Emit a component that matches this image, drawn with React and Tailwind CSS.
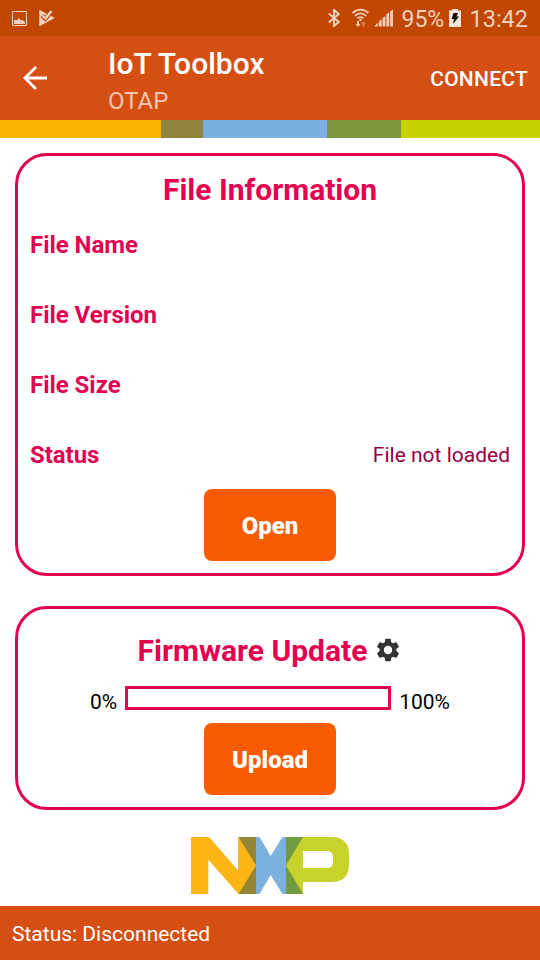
import React from "react";

const fileRows = [
  { label: "File Name", value: "" },
  { label: "File Version", value: "" },
  { label: "File Size", value: "" },
  { label: "Status", value: "File not loaded" },
];

function StatusBar() {
  return (
    <div className="flex h-9 shrink-0 items-center bg-[#c14600] text-[#f3d0bd]">
      <svg className="ml-3 h-[15px] w-[15px]" viewBox="0 0 15 15" fill="none">
        <path d="M.5.5h14v14H.5z" stroke="currentColor" />
        <path d="M2 13V9.500l1.500-1 1 1L7 7l2 2.500 1.500-.5L13 11v2z" fill="currentColor" />
      </svg>
      <svg className="ml-3 h-4 w-4" viewBox="0 0 16 16">
        <path d="M.5 0 8 4l7.500 4L.5 16z" fill="currentColor" />
        <path d="m3 5.500 3.500 3.500L13 1.500" fill="none" stroke="#c14600" strokeWidth="4.400" />
        <path d="M.5 0 6 3 3.500 4.500.5 5zM12 6l3.500 2L.5 16V6l5.500 6z" fill="currentColor" />
        <path d="m3.500 5.500 3 3L12.500 1" fill="none" stroke="currentColor" strokeWidth="2.400" />
      </svg>
      <div className="grow" />
      <svg className="h-[18px] w-3" viewBox="0 0 12 18" fill="none" stroke="currentColor" strokeWidth="2">
        <path d="m.8 4.500 10 8.500L6 17V1l4.800 4L.8 13.500" />
      </svg>
      <svg className="ml-3 h-5 w-[17px]" viewBox="0 0 17 20" fill="none" stroke="currentColor" strokeWidth="1.900">
        <path d="M.7 5C5 .5 12 .5 16.300 5M3 7.800c3-3.200 8-3.200 11 0M5.500 10.400c1.700-1.700 4.300-1.700 6 0" />
        <circle cx="8.500" cy="12" r="1.200" fill="currentColor" stroke="none" />
        <path d="M5 13h2v3h1.500L6 19l-2.500-3H5z" fill="currentColor" stroke="none" />
        <path d="M10.500 18.500V16H9l2.500-3 2.500 3h-1.500v2.500z" fill="#d98252" stroke="none" />
      </svg>
      <svg className="ml-1.5 h-[18px] w-[18px]" viewBox="0 0 19 18" fill="currentColor">
        <path d="M0 18v-1l3-3v4zM4 18v-5l3-3v8zM8 18V9l3-2v11zM12 18V5l3-2v15zM16 18V2l3-2v18z" />
      </svg>
      <span className="mt-0.5 ml-2 w-[43px] text-[23px] leading-none whitespace-nowrap">95%</span>
      <svg className="ml-[5px] h-[18px] w-3" viewBox="0 0 12 18">
        <path d="M3 0h6v1.500h3V18H0V1.500h3z" fill="#f7e5dc" />
        <path d="M4.500 4H9L7.500 7.500H10L4 15l1-5H2.500z" fill="#111" />
      </svg>
      <span className="mt-1 mr-3 ml-2 text-[23.500px] leading-none">13:42</span>
    </div>
  );
}

function AppBar() {
  return (
    <header className="flex h-[84px] shrink-0 items-center bg-[#d54e12] text-white">
      <svg className="ml-[23px] h-6 w-6" viewBox="0 0 24 24" fill="none" stroke="currentColor" strokeWidth="2.800">
        <path d="M24 12H2M13 1 2 12l11 11" />
      </svg>
      <div className="mt-[9px] ml-[61px] grow">
        <h1 className="text-[30px] leading-9 font-medium">IoT Toolbox</h1>
        <p className="mt-px text-[24px] leading-9 text-[#f1c5ae]">OTAP</p>
      </div>
      <button className="mt-1 mr-3 text-[21px] font-medium tracking-[0.25px]">CONNECT</button>
    </header>
  );
}

function ColorStrip() {
  return (
    <div className="flex h-[18px] shrink-0">
      <div className="w-[161px] bg-[#fab400]" />
      <div className="w-[42px] bg-[#92833f]" />
      <div className="w-[124px] bg-[#7bafdf]" />
      <div className="w-[74px] bg-[#7e963d]" />
      <div className="grow bg-[#c8d200]" />
    </div>
  );
}

function ActionButton({ children }) {
  return (
    <button className="mx-auto block h-[72px] w-[132px] rounded-[8px] bg-[#f85b00] pt-0.5 text-[24px] font-black text-white">
      {children}
    </button>
  );
}

function Logo() {
  return (
    <svg className="mx-auto mt-[27px] h-[57px] w-[158px] shrink-0" viewBox="0 0 158 57">
      <path d="M47.500 0H65v57H47.500z" fill="#958536" />
      <path d="M95 0h17v57H95z" fill="#739a3e" />
      <path d="M0 0h18l29.500 34V0L65 28.500 47.500 57 17.300 22.700V57H0z" fill="#fdb415" />
      <path d="M65 0h3.500l11.200 19L91.500 0H95v57h-3.500L79.700 38 68.500 57H65z" fill="#7cb1de" />
      <path d="M112 0h28q18 0 18 17v11q0 17-18 17h-28v12L95 28.500zM112 14v17h24q6 0 6-6v-5q0-6-6-6z" fill="#c7d32c" fillRule="evenodd" />
    </svg>
  );
}

export default function App() {
  return (
    <div className="flex h-[960px] w-[540px] flex-col overflow-hidden bg-white font-[Roboto,sans-serif]">
      <StatusBar />
      <AppBar />
      <ColorStrip />

      <section className="mx-[15px] mt-[15px] h-[423px] shrink-0 rounded-[32px] border-[3px] border-[#e4004f] px-3">
        <h2 className="mt-3.5 text-center text-[30px] leading-10 font-bold text-[#e4004f]">File Information</h2>
        <div className="mt-[-1px]">
          {fileRows.map((row) => (
            <div key={row.label} className="flex h-[70px] items-center justify-between">
              <span className="pt-0.5 text-[24px] font-bold tracking-[-0.04px] text-[#e4004f]">{row.label}</span>
              <span className="pt-1 text-[21px] text-[#96003f]">{row.value}</span>
            </div>
          ))}
        </div>
        <ActionButton>Open</ActionButton>
      </section>

      <section className="mx-[15px] mt-[30px] h-[204px] shrink-0 rounded-[32px] border-[3px] border-[#e4004f]">
        <div className="mt-[22px] flex h-10 items-center justify-center">
          <h2 className="text-[30px] leading-10 font-bold text-[#e4004f]">Firmware Update</h2>
          <svg className="mt-[-3px] ml-[7px] h-7 w-7" viewBox="0 0 24 24" fill="#333">
            <path d="M19.140 12.940c.04-.3.060-.61.060-.94s-.02-.64-.07-.94l2.030-1.580a.49.49 0 0 0 .12-.61l-1.920-3.320a.49.49 0 0 0-.59-.22l-2.390.96a7 7 0 0 0-1.620-.94l-.36-2.540A.48.480 0 0 0 13.920 2.400h-3.840a.48.480 0 0 0-.48.410l-.36 2.540a7 7 0 0 0-1.620.94l-2.390-.96a.49.490 0 0 0-.59.220L2.720 8.870a.49.490 0 0 0 .12.610l2.030 1.580a7 7 0 0 0 0 1.880l-2.030 1.580a.49.490 0 0 0-.12.610l1.920 3.320c.12.220.37.290.59.220l2.390-.96c.5.380 1.030.7 1.620.94l.36 2.540c.05.240.24.410.48.410h3.840c.24 0 .44-.17.480-.41l.36-2.540a7 7 0 0 0 1.620-.94l2.390.96c.22.080.47 0 .59-.22l1.920-3.320a.49.490 0 0 0-.12-.61zM12 15.600a3.600 3.600 0 1 1 0-7.200 3.600 3.600 0 0 1 0 7.200" />
          </svg>
        </div>
        <div className="mt-[15px] flex h-6 justify-center text-[21px] text-black">
          <span className="mt-1 leading-6">0%</span>
          <div className="mx-2 w-[266px] border-[3px] border-[#e4004f]" />
          <span className="mt-1 leading-6">100%</span>
        </div>
        <div className="mt-[13px]">
          <ActionButton>Upload</ActionButton>
        </div>
      </section>

      <Logo />

      <footer className="mt-auto flex h-[54px] shrink-0 items-center bg-[#d54e12] px-3 pt-[3px] text-[21px] text-white">
        Status: Disconnected
      </footer>
    </div>
  );
}
